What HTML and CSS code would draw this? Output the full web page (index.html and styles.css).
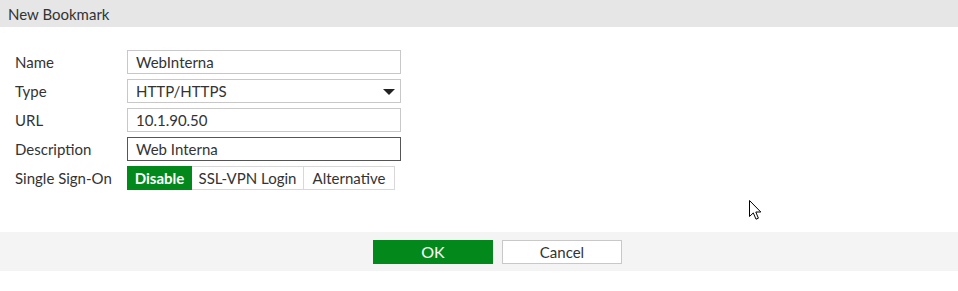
FILE: index.html
```html
<!DOCTYPE html>
<html lang="en">
<head>
  <meta charset="UTF-8" />
  <title>New Bookmark</title>
  <link rel="stylesheet" href="styles.css">
</head>
<body>
<div class="dialog">
  <div class="dialog-title">New Bookmark</div>

  <div class="form">
    <label class="label" for="name">Name</label>
    <input class="field" id="name" type="text" value="WebInterna">

    <span class="label">Type</span>
    <div class="field select">
      <span>HTTP/HTTPS</span>
      <span class="caret"></span>
    </div>

    <label class="label" for="url">URL</label>
    <input class="field" id="url" type="text" value="10.1.90.50">

    <label class="label" for="desc">Description</label>
    <input class="field focused" id="desc" type="text" value="Web Interna">

    <span class="label">Single Sign-On</span>
    <div class="toggle">
      <button class="toggle-btn active" type="button">Disable</button>
      <button class="toggle-btn" type="button">SSL-VPN Login</button>
      <button class="toggle-btn" type="button">Alternative</button>
    </div>
  </div>

  <div class="footer">
    <button class="btn btn-ok" type="button">OK</button>
    <button class="btn btn-cancel" type="button">Cancel</button>
  </div>
</div>

<svg class="cursor" width="13" height="21" viewBox="0 0 13 21">
  <path d="M0.5 0.5 L0.5 16.5 L4.3 12.9 L7 19.2 L9.4 18.2 L6.8 12 L11.8 12 Z" fill="#fff" stroke="#000" stroke-width="1"/>
</svg>
</body>
</html>
```

FILE: styles.css
```css
body {
  margin: 0;
  background: #fff;
  font-family: Lato, "Liberation Sans", sans-serif;
  font-size: 15px;
  color: #333;
  position: relative;
}

.dialog-title {
  height: 27px;
  line-height: 28px;
  padding-left: 8px;
  background: #e6e6e6;
  color: #333;
}

.form {
  display: grid;
  grid-template-columns: 112px 274px;
  grid-auto-rows: 24px;
  row-gap: 5px;
  padding: 23px 0 0 15px;
  align-items: center;
}

.label {
  color: #333;
}

.field {
  box-sizing: border-box;
  height: 24px;
  width: 274px;
  margin: 0;
  padding: 0 8px;
  border: 1px solid #c8c8c8;
  border-radius: 0;
  font-family: inherit;
  font-size: 15px;
  color: #333;
  background: #fff;
  outline: none;
}

.field.focused {
  border-color: #555;
}

.select {
  display: flex;
  align-items: center;
  justify-content: space-between;
  padding-right: 5px;
}

.caret {
  width: 0;
  height: 0;
  border-left: 6px solid transparent;
  border-right: 6px solid transparent;
  border-top: 6px solid #222;
  margin-top: 1px;
}

.toggle {
  display: flex;
  height: 24px;
}

.toggle-btn {
  box-sizing: border-box;
  height: 24px;
  margin: 0;
  padding: 0;
  border: 1px solid #d8d8d8;
  border-left: none;
  background: #fff;
  font-family: inherit;
  font-size: 15px;
  color: #333;
}

.toggle-btn:first-child {
  border-left: 1px solid #d8d8d8;
}

.toggle-btn.active {
  background: #03891b;
  border-color: #03891b;
  color: #fff;
  font-weight: bold;
  width: 65px;
}

.toggle-btn:nth-child(2) {
  width: 112px;
}

.toggle-btn:nth-child(3) {
  width: 91px;
}

.footer {
  margin-top: 42px;
  height: 39px;
  background: #f4f4f4;
  display: flex;
  justify-content: center;
  align-items: center;
  gap: 9px;
  padding-left: 37px;
}

.btn {
  box-sizing: border-box;
  width: 120px;
  height: 24px;
  margin: 0;
  font-family: inherit;
  font-size: 15px;
}

.btn-ok {
  background: #03891b;
  border: 1px solid #03891b;
  color: #fff;
  font-size: 16px;
}

.btn-cancel {
  background: #fff;
  border: 1px solid #c8c8c8;
  color: #333;
}

.cursor {
  position: absolute;
  left: 749px;
  top: 200px;
}
```
